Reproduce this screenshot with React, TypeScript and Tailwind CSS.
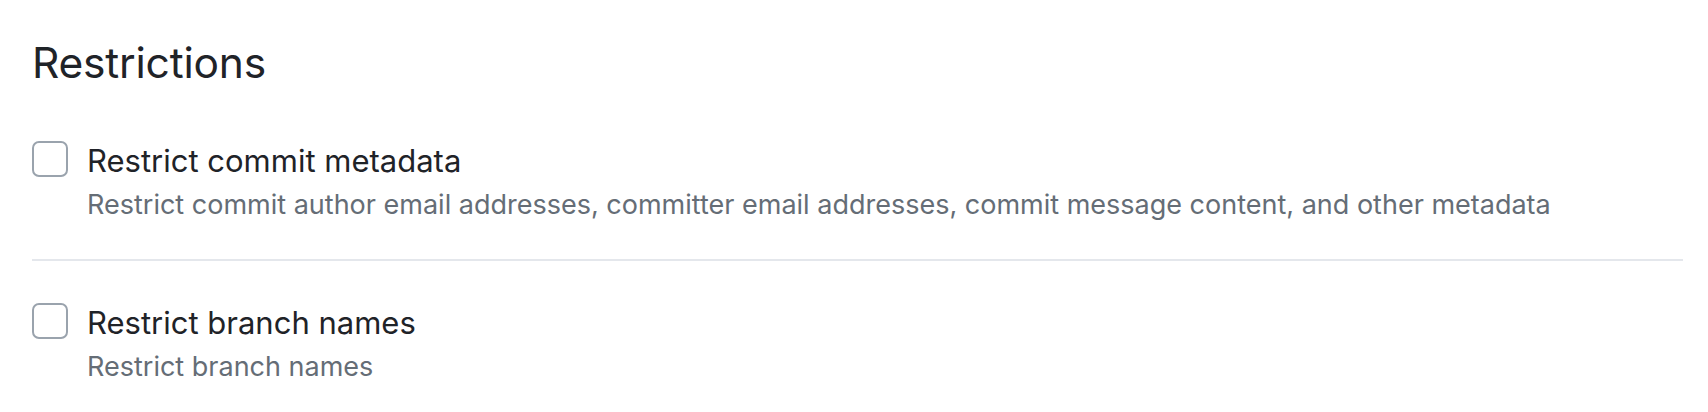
import React from 'react';

const rules = [
  {
    id: 'commit-metadata',
    title: 'Restrict commit metadata',
    description:
      'Restrict commit author email addresses, committer email addresses, commit message content, and other metadata',
  },
  {
    id: 'branch-names',
    title: 'Restrict branch names',
    description: 'Restrict branch names',
  },
];

function RuleRow({ title, description }: { title: string; description: string }) {
  return (
    <label className="flex items-start gap-[19px] cursor-pointer">
      <input
        type="checkbox"
        className="appearance-none w-[36px] h-[36px] shrink-0 rounded-[7px] border-[2px] border-[#9aa3ad] bg-white"
      />
      <div className="flex flex-col pt-[1px]">
        <span className="text-[31px] leading-[38px] text-[#1f2328]">{title}</span>
        <span className="mt-[6px] text-[27px] leading-[38px] text-[#656d76]">{description}</span>
      </div>
    </label>
  );
}

export default function App() {
  return (
    <div
      className="w-full h-[412px] bg-white pl-[32px] pr-[25px] pt-[36px]"
      style={{ fontFamily: 'Inter, "Noto Sans", sans-serif' }}
    >
      <h2 className="text-[42.5px] leading-[54px] text-[#1f2328] tracking-[-0.2px]">Restrictions</h2>
      <div className="mt-[51px] flex flex-col">
        {rules.map((rule, i) => (
          <div key={rule.id}>
            {i > 0 && <div className="h-[2px] bg-[#e4e7ec] mt-[35px] mb-[42px]" />}
            <RuleRow title={rule.title} description={rule.description} />
          </div>
        ))}
      </div>
    </div>
  );
}
